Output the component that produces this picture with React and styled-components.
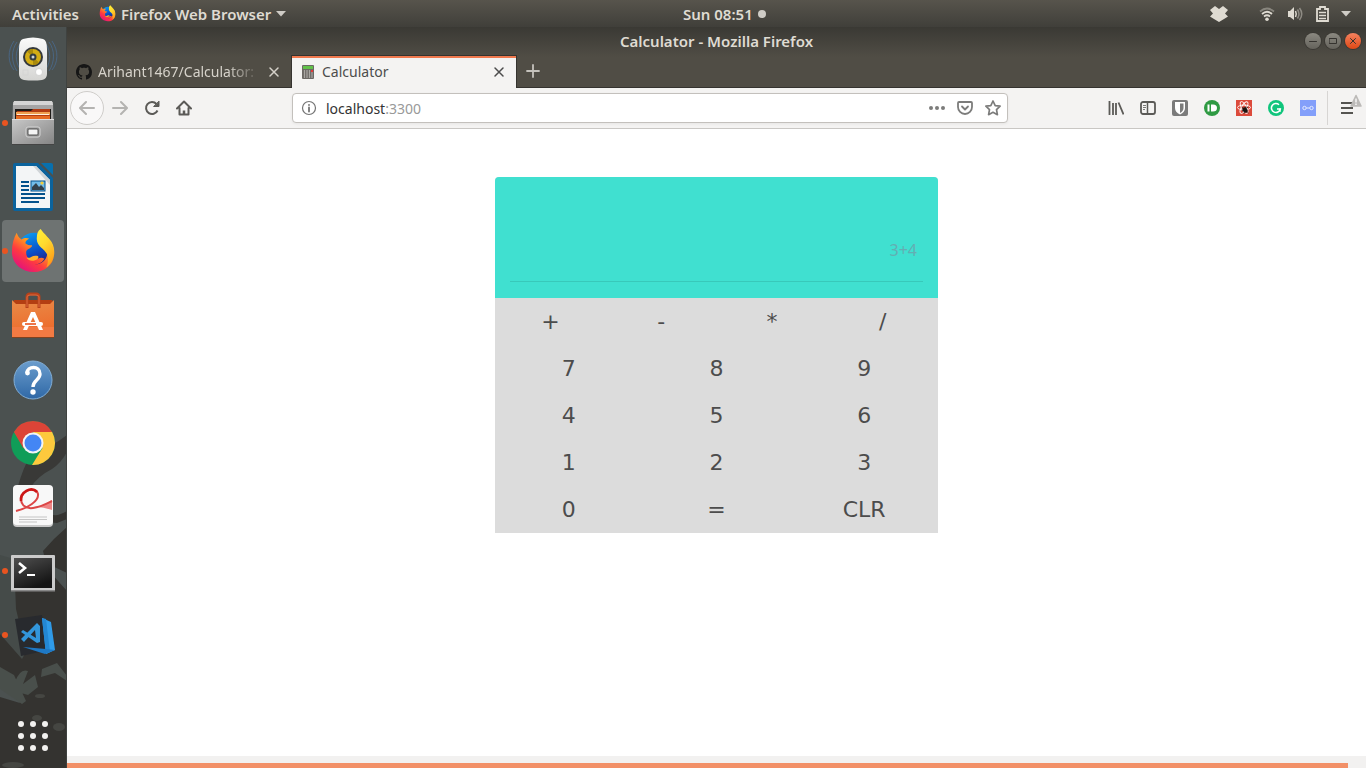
import React, { useState } from "react";
import styled, { createGlobalStyle, css } from "styled-components";

const UI_FONT = '"Noto Sans", "Open Sans", sans-serif';

const GlobalStyle = createGlobalStyle`
  *, *::before, *::after { box-sizing: border-box; }
  body { margin: 0; background: #fff; font-family: ${UI_FONT}; font-size: 14px; }
  button, input { font: inherit; color: inherit; margin: 0; padding: 0; border: 0; background: none; }
  svg { display: block; flex: none; }
`;

/* ---------- desktop frame ---------- */

const Desktop = styled.div`
  min-height: 100vh;
  display: flex;
  flex-direction: column;
`;

const TopBar = styled.header`
  height: 27px;
  display: grid;
  grid-template-columns: 1fr 1fr;
  background: linear-gradient(#57544c, #403f3a);
  color: #dfdbd2;
  font-size: 15px;
  font-weight: 600;
`;

const TopGroup = styled.div`
  display: flex;
  align-items: center;
  padding-left: ${(p) => p.$inset || 0}px;
  gap: ${(p) => p.$gap || 0}px;
  margin-left: ${(p) => (p.$end ? "auto" : "0")};
  padding-right: ${(p) => (p.$end ? 15 : 0)}px;
`;

const TopRight = styled.div`
  display: flex;
`;

const TopButton = styled.button`
  display: flex;
  align-items: center;
  gap: 5px;
  line-height: 20px;
  white-space: nowrap;
`;

const ClockDot = styled.span`
  width: 8px;
  height: 8px;
  border-radius: 50%;
  background: #cfccc6;
`;

const Workspace = styled.div`
  flex: 1;
  display: flex;
`;

/* ---------- dock ---------- */

const Dock = styled.nav`
  position: relative;
  width: 67px;
  flex: none;
  display: flex;
  flex-direction: column;
  background: #4b5150;
`;

const Wallpaper = styled.svg`
  position: absolute;
  inset: 0;
  width: 100%;
  height: 100%;
`;

const DockButton = styled.button`
  position: relative;
  width: 66px;
  height: 64px;
  display: flex;
  align-items: center;
  justify-content: center;
  ${(p) => p.$last && css`margin-top: auto;`}
  ${(p) =>
    p.$active &&
    css`
      &::before {
        content: "";
        position: absolute;
        inset: 1px 2px;
        border-radius: 4px;
        background: #6e7372;
      }
    `}
  ${(p) =>
    p.$running &&
    css`
      &::after {
        content: "";
        position: absolute;
        left: 2px;
        top: 29px;
        width: 6px;
        height: 6px;
        border-radius: 50%;
        background: #e95420;
      }
    `}
  svg { position: relative; }
`;

/* ---------- browser window ---------- */

const Window = styled.main`
  flex: 1;
  min-width: 0;
  display: flex;
  flex-direction: column;
  background: #fff;
`;

const WindowHead = styled.div`
  background: linear-gradient(#3a3934, #504d45 30px);
  border-bottom: 1px solid #35332f;
`;

const TitleBar = styled.div`
  height: 28px;
  display: grid;
  grid-template-columns: 1fr auto 1fr;
  align-items: center;
  padding: 0 5px;
`;

const Title = styled.h1`
  margin: 0;
  grid-column: 2;
  font-size: 15px;
  line-height: 20px;
  font-weight: 600;
  color: #dfdbd2;
`;

const WindowControls = styled.div`
  display: flex;
  justify-content: flex-end;
  gap: 4px;
`;

const WindowControl = styled.button`
  width: 16px;
  height: 16px;
  border-radius: 50%;
  display: grid;
  place-items: center;
  color: #35332f;
  background: ${(p) => (p.$close ? "linear-gradient(#f4825f, #de4815)" : "linear-gradient(#8b8981, #65635c)")};
  box-shadow: 0 0 0 1px #3b3934;
`;

const TabStrip = styled.div`
  height: 33px;
  display: flex;
  margin-bottom: -1px;
`;

const Tab = styled.div`
  position: relative;
  width: 224px;
  display: flex;
  align-items: center;
  gap: 6px;
  padding: 0 9px;
  color: ${(p) => (p.$selected ? "#4c4c4c" : "#d6d2ca")};
  ${(p) =>
    p.$selected &&
    css`
      width: 226px;
      border: 1px solid #35332f;
      border-bottom: 0;
      background: linear-gradient(#f1794e 2px, #f4f3f2 2px);
    `}
`;

const TabTitle = styled.span`
  flex: 1;
  min-width: 0;
  overflow: hidden;
  white-space: nowrap;
  line-height: 20px;
  ${(p) => p.$fade && css`mask-image: linear-gradient(90deg, #000 80%, transparent);`}
`;

const IconButton = styled.button`
  width: 32px;
  height: 32px;
  flex: none;
  display: grid;
  place-items: center;
  color: ${(p) => p.$color || "#5b5a57"};
`;

const CloseTab = styled(IconButton)`
  width: 16px;
  height: 16px;
  color: inherit;
`;

const Toolbar = styled.div`
  height: 41px;
  display: flex;
  align-items: center;
  padding: 0 3px;
  background: #f4f3f2;
  border-bottom: 1px solid #c9c7c4;
`;

const BackButton = styled(IconButton)`
  width: 34px;
  height: 34px;
  border: 1px solid #cfcdca;
  border-radius: 50%;
  background: #f9f8f8;
`;

const Spacer = styled.div`
  flex: 0 1 92px;
`;

const AddressBar = styled.div`
  flex: 1;
  min-width: 0;
  height: 30px;
  display: flex;
  align-items: center;
  padding: 0 0 0 8px;
  border: 1px solid #c3c0bc;
  border-radius: 4px;
  background: #fff;
  box-shadow: 0 1px 3px rgba(0, 0, 0, 0.06);
  color: #737373;
`;

const Url = styled.a`
  flex: 1;
  padding: 2px 0 0 9px;
  line-height: 20px;
  color: #999;
  text-decoration: none;
`;

const Host = styled.span`
  color: #333;
`;

const AddressAction = styled(IconButton)`
  width: 28px;
  height: 28px;
  color: #7c7c7b;
`;

const Divider = styled.span`
  width: 1px;
  height: 34px;
  margin: 0 3px;
  background: #d7d5d3;
`;

/* ---------- page ---------- */

const Page = styled.section`
  flex: 1;
  padding-top: 48px;
  display: flex;
  justify-content: center;
  align-items: flex-start;
`;

const Calculator = styled.form`
  width: calc((100% + 30px) / 3);
  border-radius: 4px 4px 0 0;
  overflow: hidden;
  font-family: "DejaVu Sans", sans-serif;
  background: #dcdcdc;
`;

const Display = styled.div`
  height: 121px;
  padding: 42px 15px 16px;
  background: #40e0d0;
`;

const Expression = styled.input`
  display: block;
  width: 100%;
  height: 63px;
  padding: 0 6px;
  border-bottom: 1px solid #38c9ba;
  font-family: ${UI_FONT};
  font-size: 16px;
  text-align: right;
  color: #63aeb2;
  outline: none;
`;

const KeyRow = styled.div`
  display: flex;
`;

const Key = styled.button`
  flex: 1 1 0;
  height: 47px;
  font-size: 22px;
  line-height: 33px;
  color: #4c4c4c;
`;

const ScrollTrack = styled.div`
  height: 12px;
  padding: 7px 18px 0 0;
  background: #f2f1f0;
`;

const ScrollThumb = styled.div`
  height: 5px;
  background: #f29067;
`;

/* ---------- drawings ---------- */

function FirefoxIcon({ size, id }) {
  return (
    <svg width={size} height={size} viewBox="0 0 48 48">
      <defs>
        <linearGradient id={id + "o"} x1="0.85" y1="0.1" x2="0.2" y2="0.95">
          <stop offset="0" stopColor="#ffe13a" />
          <stop offset="0.35" stopColor="#ff9a1f" />
          <stop offset="0.65" stopColor="#ff3b3f" />
          <stop offset="1" stopColor="#e2107f" />
        </linearGradient>
        <linearGradient id={id + "b"} x1="0.3" y1="0" x2="0.7" y2="1">
          <stop offset="0" stopColor="#0a9bf0" />
          <stop offset="0.6" stopColor="#0a4bc4" />
          <stop offset="1" stopColor="#2a1b78" />
        </linearGradient>
        <linearGradient id={id + "y"} x1="0" y1="0" x2="0.5" y2="1">
          <stop offset="0" stopColor="#fff13a" />
          <stop offset="0.5" stopColor="#ffd92e" />
          <stop offset="1" stopColor="#ffa31a" />
        </linearGradient>
      </defs>
      <circle cx="25" cy="22" r="17" fill={`url(#${id}b)`} />
      <path d="M7 5c1 3 2 5 5 7 3-2 5-2 8-1-2 1-4 3-4 5 2 2 4 2 7 2 0 3-4 3-6 6-1 7 4 10 9 9 4-1 6-3 10-1-3 5-8 6-12 6 9 1 15-5 15-13 0-4-2-6-4-9 5 1 8 5 8 9 1-7-2-12-5-16 6 4 9 11 8 19-1 11-10 18-21 18C12 46 2 37 2 25 2 17 4 10 7 5z" fill={`url(#${id}o)`} />
      <path d="M32 1c3 5 11 10 13 19 2 9-1 17-7 21 2-5 2-9 1-13-3-7-12-9-11-18 0-4 1-7 4-9z" fill={`url(#${id}y)`} />
      <path d="M17 31c5 1 6-3 11-2 2 0 2 2 1 3-4 3-9 3-12-1z" fill="#ffb02d" />
    </svg>
  );
}

const SpeakerIcon = () => (
  <svg width="50" height="50" viewBox="0 0 50 50">
    <defs>
      <linearGradient id="spk" x1="0" y1="0" x2="0" y2="1">
        <stop offset="0" stopColor="#fafafa" />
        <stop offset="1" stopColor="#d5d5d3" />
      </linearGradient>
    </defs>
    <g fill="none" stroke="#4a6c93" strokeWidth="1">
      <path d="M9 8C3 16 3 28 9 37M6 7C-1 17 0 29 6 36M12 10c-5 8-5 17 0 25M41 8c6 8 6 20 0 29M44 7c7 10 6 22 0 29M38 10c5 8 5 17 0 25" opacity=".75" />
    </g>
    <path d="M15 5Q25 2 35 5q4 1 4 10v25q0 5-5 6-9 1-18 0-5-1-5-6V15q0-9 4-10z" fill="url(#spk)" />
    <circle cx="25" cy="23" r="10" fill="#34383c" />
    <circle cx="25" cy="23" r="8" fill="#d2ac15" />
    <path d="M25 23 19 17.500a8 8 0 0 1 6-2.500zM25 23l6 5.500a8 8 0 0 1-6 2.500z" fill="#a98a0c" />
    <circle cx="25" cy="23" r="3.500" fill="#333b42" />
    <circle cx="25" cy="23" r="1.500" fill="#ccd4d9" />
    <circle cx="31" cy="38" r="3.500" fill="#fff" stroke="#c4c4c4" strokeWidth=".6" />
    <rect x="15" y="36" width="5" height="5" fill="none" stroke="#d2d2d2" strokeWidth=".7" />
  </svg>
);

const FilesIcon = () => (
  <svg width="44" height="46" viewBox="0 0 44 46">
    <defs>
      <linearGradient id="fil" x1="0" y1="0" x2="1" y2="1">
        <stop offset="0" stopColor="#c8c8c8" />
        <stop offset="1" stopColor="#858585" />
      </linearGradient>
    </defs>
    <path d="M2 2h40l1 38H1z" fill="#a5a5a5" />
    <path d="M3 1h38l1 4H2z" fill="#d5d5d5" />
    <rect x="4" y="9" width="36" height="12" fill="#1e1b18" />
    <path d="M5 13l1-2h14l2-2h17v12H5z" fill="#b23c13" />
    <rect x="5" y="12" width="34" height="3" fill="#f0a050" />
    <rect x="6" y="14" width="32" height="1" fill="#fff0dc" />
    <rect x="5" y="16" width="34" height="3" fill="#e66b22" />
    <path d="M1 19h42v25H1z" fill="url(#fil)" />
    <path d="M1 19h42v1H1z" fill="#dedede" />
    <rect x="15" y="27" width="14" height="10" rx="2" fill="#8d8d8d" stroke="#d5d5d5" />
    <rect x="17" y="29" width="10" height="6" rx="1" fill="#f4f4f4" stroke="#555" />
    <path d="M1 44h42v1H1z" fill="#444" />
  </svg>
);

const WriterIcon = () => (
  <svg width="40" height="48" viewBox="0 0 40 48">
    <path d="M2 0h23l15 15v31q0 2-2 2H2q-2 0-2-2V2q0-2 2-2z" fill="#0b639d" />
    <path d="M3 3h20l14 14v28H3z" fill="#f3f5f6" />
    <path d="M23 3l14 14v5L20 3z" fill="#d0d4d7" />
    <path d="M28 0h10q2 0 2 2v10z" fill="#0870ae" />
    <path d="M8 19h8M8 23h8M8 27h8M8 31h24M8 35h24M8 39h18" stroke="#04528c" strokeWidth="2" />
    <rect x="18" y="18" width="14" height="10" fill="#72bce8" stroke="#04528c" />
    <circle cx="29" cy="20" r="1.6" fill="#f6ce38" />
    <path d="M19 27v-3l4-4 3 4 2-2 3 3v2z" fill="#34414a" />
  </svg>
);

const SoftwareIcon = () => (
  <svg width="44" height="48" viewBox="0 -2 44 48">
    <defs>
      <linearGradient id="sw" x1="0" y1="0" x2="0.2" y2="1">
        <stop offset="0" stopColor="#e98b48" />
        <stop offset="1" stopColor="#ed6a2b" />
      </linearGradient>
    </defs>
    <path d="M3 7h38l2 4H1z" fill="#b33e12" />
    <path d="M1 7l4 4h34l4-4v37H1z" fill="url(#sw)" />
    <path d="M1 34h42v10H1z" fill="#f27a43" />
    <path d="M16 15V4q0-3 3-3h6q3 0 3 3v11" fill="none" stroke="#b8421a" strokeWidth="3" />
    <path d="M16 14V4q0-2 3-2h6q3 0 3 2v10" fill="none" stroke="#dd6a3f" strokeWidth="1" />
    <path d="M20 19h4l8 18h-4l-6-13-6 13h-4z" fill="#fff" />
    <path d="M13 29h17q2 0 2 2t-2 2H13q-2 0-2-2t2-2z" fill="#fff" />
    <path d="M14 31h11" stroke="#e95420" strokeWidth="1.6" />
    <path d="M1 44h42v1H1z" fill="#80411f" />
  </svg>
);

const HelpIcon = () => (
  <svg width="42" height="44" viewBox="0 -2 42 44">
    <defs>
      <linearGradient id="hlp" x1="0" y1="0" x2="0" y2="1">
        <stop offset="0" stopColor="#6b9dcd" />
        <stop offset="1" stopColor="#2f68a6" />
      </linearGradient>
    </defs>
    <circle cx="21" cy="21" r="19" fill="url(#hlp)" stroke="#82aed6" strokeWidth="1" />
    <path d="M15 14c0-7 13-8 13 1 0 6-7 6-7 13" fill="none" stroke="#fff" strokeWidth="3.4" />
    <circle cx="15.500" cy="14" r="2.400" fill="#fff" />
    <circle cx="21" cy="33" r="2.700" fill="#fff" />
  </svg>
);

const ChromeIcon = () => (
  <svg width="46" height="46" viewBox="0 0 46 46">
    <circle cx="23" cy="23" r="22" fill="#109d58" />
    <path d="M23 12h19.100A22 22 0 0 1 22 45l10.500-17z" fill="#fdc93d" />
    <path d="M3.900 12A22 22 0 0 1 42.100 12H23L13.500 28.500z" fill="#dc4437" />
    <circle cx="23" cy="23" r="10.500" fill="#f4f4f4" />
    <circle cx="23" cy="23" r="8.500" fill="#4486f4" />
  </svg>
);

const ReaderIcon = () => (
  <svg width="42" height="44" viewBox="0 1 42 44">
    <rect x="1" y="2" width="40" height="41" rx="4" fill="#c9c9c9" />
    <rect x="1" y="1" width="40" height="40" rx="4" fill="#f8f8f8" />
    <path d="M22 22.500Q33 22 40 16v10q-8-3-18-3.500z" fill="#ee8585" />
    <path d="M4 27C16 24 27 17 26 10 25 4 14 4 10 12 7 20 13 25 21 24 29 23 34 20 40 17" fill="none" stroke="#dc4646" strokeWidth="2" />
    <path d="M9 17C8 8 19 2 25 8" fill="none" stroke="#cc1717" strokeWidth="2.600" />
    <path d="M7 33h28M7 35.500h28M7 38h18" stroke="#c4c4c4" strokeWidth="1" />
  </svg>
);

const TerminalIcon = () => (
  <svg width="46" height="42" viewBox="0 -4 46 42">
    <defs>
      <linearGradient id="trm" x1="0" y1="0" x2="0.500" y2="1">
        <stop offset="0" stopColor="#4f4f4f" />
        <stop offset="1" stopColor="#151515" />
      </linearGradient>
    </defs>
    <rect x="1" y="1" width="44" height="36" rx="1" fill="#cbcbcb" />
    <path d="M1 36h44v1.500H1z" fill="#888" />
    <rect x="4" y="4" width="38" height="30" fill="url(#trm)" />
    <path d="M9 9l6 5-6 5" fill="none" stroke="#fff" strokeWidth="2.600" />
    <path d="M17 21h8" stroke="#fff" strokeWidth="2" />
  </svg>
);

const CodeIcon = () => (
  <svg width="44" height="44" viewBox="0 0 44 44">
    <path d="M4 6l27-4 7 35-28 6z" fill="#282a2e" />
    <path d="M31 5l9 4 4 28-9 4z" fill="#2f9be8" />
    <path d="M31 5l4 1 4 33-4 2z" fill="#2387d3" />
    <path d="M12 34l23 2 9 1-10 4z" fill="#1e78c4" />
    <path d="M26 10l3 3 0 16-3 1L10 19l2-2 13 8-1-8-11 12-3-3z" fill="#3296db" />
  </svg>
);

const AppsIcon = () => (
  <svg width="32" height="32" viewBox="0 0 32 32" fill="#f2f1ef">
    {[4, 16, 28].map((y) => [4, 16, 28].map((x) => <circle key={x + "-" + y} cx={x} cy={y} r="3" />))}
  </svg>
);

const CalcFavicon = () => (
  <svg width="15" height="16" viewBox="0 0 15 16">
    <rect x="1" y="1" width="12" height="14" rx="1" fill="#6c6965" />
    <rect x="2" y="2" width="10" height="3" fill="#62c24a" />
    <path d="M3.500 6v8M6 6v8M8.500 6v8M11 8v6" stroke="#a9a6a2" strokeWidth="1.200" />
    <path d="M10 6h2v2h-2z" fill="#e23838" />
  </svg>
);

const GithubIcon = () => (
  <svg width="16" height="16" viewBox="0 0 16 16" fill="#161616">
    <path d="M8 0C3.580 0 0 3.580 0 8c0 3.540 2.290 6.530 5.470 7.590.4.070.55-.170.55-.380 0-.190-.010-.820-.010-1.490-2.010.370-2.530-.490-2.690-.940-.090-.230-.480-.940-.820-1.130-.280-.150-.680-.520-.010-.530.630-.010 1.080.580 1.230.820.720 1.210 1.870.870 2.330.660.070-.520.280-.870.510-1.070-1.780-.200-3.640-.890-3.640-3.950 0-.870.310-1.590.820-2.150-.080-.200-.360-1.020.080-2.120 0 0 .670-.210 2.200.820.640-.180 1.320-.270 2-.270s1.360.090 2 .270c1.530-1.040 2.200-.820 2.200-.820.440 1.100.160 1.920.080 2.120.510.560.820 1.270.820 2.150 0 3.070-1.870 3.750-3.650 3.950.290.250.540.730.540 1.480 0 1.070-.010 1.930-.010 2.200 0 .210.150.460.550.380A8.010 8.010 0 0 0 16 8c0-4.420-3.580-8-8-8z" />
  </svg>
);

function Line({ children, size = 16, width = 2, box = 16 }) {
  return (
    <svg width={size} height={size} viewBox={`0 0 ${box} ${box}`} fill="none" stroke="currentColor" strokeWidth={width} strokeLinecap="round" strokeLinejoin="round">
      {children}
    </svg>
  );
}

const Caret = () => (
  <svg width="10" height="6" viewBox="0 0 10 6"><path d="M0 0h10L5 5.500z" fill="#cfccc6" /></svg>
);

const DropboxIcon = () => (
  <svg width="18" height="18" viewBox="0 0 18 18" fill="#dfdbd2">
    <path d="M5 1 9 4l4-3 5 4-3 3.500 3 3-4 2.500L9 17l-5-3-4-2.500 3-3L0 5z" />
  </svg>
);

const WifiIcon = () => (
  <svg width="16" height="16" viewBox="0 0 16 16" fill="none" stroke="#dfdbd2" strokeWidth="1.700">
    <path d="M1 5.500Q8-.500 15 5.500" opacity=".4" />
    <path d="M3 8q5-4.500 10 0M5 10.500q3-2.500 6 0" />
    <circle cx="8" cy="13.200" r="1.800" fill="#dfdbd2" stroke="none" />
  </svg>
);

const VolumeIcon = () => (
  <svg width="16" height="16" viewBox="0 0 16 16" fill="none" stroke="#dfdbd2" strokeWidth="1.500">
    <path d="M1 5h2l4-4v13L3 11H1z" fill="#dfdbd2" stroke="none" />
    <path d="M8.500 5q1.500 3 0 6" />
    <path d="M10.500 3.500q3 4.500 0 9M12.500 2q4.500 6 0 12" opacity=".45" />
  </svg>
);

const BatteryIcon = () => (
  <svg width="14" height="18" viewBox="0 0 14 18" fill="none" stroke="#dfdbd2">
    <path d="M2 4h3V2h5v2h3v12H2z" strokeWidth="1.800" />
    <path d="M4 7.500h7M4 10.500h7M4 13.500h7" strokeWidth="1.300" />
  </svg>
);

const LibraryIcon = () => (
  <svg width="16" height="16" viewBox="0 0 16 16" stroke="currentColor" strokeWidth="1.800" fill="none">
    <path d="M1.500 1v14M5 3v12M8 3v12M10.500 2.500l5 12" />
  </svg>
);

const SidebarIcon = () => (
  <svg width="16" height="16" viewBox="0 0 16 16" fill="none" stroke="currentColor">
    <rect x="1" y="2" width="14" height="12" rx="2" strokeWidth="1.800" />
    <path d="M7.500 2v12" strokeWidth="1.500" />
    <path d="M3 5.500h3M3 7.500h3M3 9.500h2" strokeWidth=".8" />
  </svg>
);

const ShieldIcon = () => (
  <svg width="16" height="16" viewBox="0 0 16 16">
    <rect width="16" height="16" rx="2" fill="#7b7b7b" />
    <path d="M3 2h10v6q0 4-5 6.500Q3 12 3 8z" fill="#fff" />
    <path d="M8 3.500h3.500V8q0 3-3.500 5z" fill="#7b7b7b" />
  </svg>
);

const BulletIcon = () => (
  <svg width="16" height="16" viewBox="0 0 16 16">
    <circle cx="8" cy="8" r="8" fill="#2f9a43" />
    <path d="M3.500 4.500h2v7h-2z" fill="#fff" />
    <path d="M7 4.500h2q4 0 4 3.500t-4 3.500H7z" fill="#fff" />
  </svg>
);

const ReactDevIcon = () => (
  <svg width="16" height="16" viewBox="0 0 16 16">
    <rect width="16" height="16" fill="#dc4a3b" />
    <g fill="none" stroke="#fff" strokeWidth=".9">
      <ellipse cx="8" cy="7.500" rx="6.500" ry="2.400" />
      <ellipse cx="8" cy="7.500" rx="6.500" ry="2.400" transform="rotate(60 8 7.500)" />
      <ellipse cx="8" cy="7.500" rx="6.500" ry="2.400" transform="rotate(120 8 7.500)" />
    </g>
    <ellipse cx="9" cy="10" rx="2.200" ry="3" fill="#1d1412" transform="rotate(-40 9 10)" />
    <path d="M5.500 7l7 6M6 11l6-4M8 13.500l2-7" stroke="#1d1412" strokeWidth=".8" />
  </svg>
);

const GrammarIcon = () => (
  <svg width="16" height="16" viewBox="0 0 16 16">
    <circle cx="8" cy="8" r="8" fill="#10c57c" />
    <path d="M11 4.700A4.500 4.500 0 1 0 12.300 9H9" fill="none" stroke="#fff" strokeWidth="1.500" />
    <path d="M12 8.500v3.500" stroke="#fff" strokeWidth="1.300" />
  </svg>
);

const GogglesIcon = () => (
  <svg width="16" height="16" viewBox="0 0 16 16">
    <rect width="16" height="16" fill="#839ffa" />
    <g fill="none" stroke="#e5ebff" strokeWidth="1">
      <circle cx="4.500" cy="8" r="1.700" />
      <circle cx="11.500" cy="8" r="1.700" />
      <path d="M6.200 8h3.600" />
    </g>
  </svg>
);

const MenuIcon = () => (
  <svg width="30" height="28" viewBox="0 0 30 28">
    <path d="M9 9h12M9 14h12M9 19h12" stroke="#555450" strokeWidth="2" />
    <path d="M24 1.500 29 12H19z" fill="#bcbab8" stroke="#bcbab8" strokeWidth="1.500" strokeLinejoin="round" />
    <path d="M24 4.500v4M24 9.500v1.500" stroke="#fff" strokeWidth="1.300" />
  </svg>
);

const CrossIcon = () => (
  <Line size={12} box={12} width={1.5}><path d="M2 2l8 8M10 2l-8 8" /></Line>
);

function DockWallpaper() {
  return (
    <Wallpaper viewBox="0 0 67 741" preserveAspectRatio="none">
      <path d="M67 408Q52 420 32 425q-9 16-14 34l12 2q8-12 22-19 9-6 15-17z" fill="#393937" />
      <path d="M67 484q-8 5-14 4-7-7-14 0 8 8 18 8l10-4zM67 500q-13 11-24 24l3 12 21 10zM0 530q12 0 18 12l24-6 25 28v177H0V670l20 6-12-23-8-8z" fill="#343330" />
      <path d="M0 528l14 4 2 50 6 25q-4 8 5 16l-5 9L0 607z" fill="#454b49" />
      <path d="M15 655q5-14 13-11l-5 13 12-9 3 12-10 8-14-4zM42 642l15-6 10 13v5l-12-8-14 4zM0 640l14 8 12 26-4 3L0 662z" fill="#494f4b" />
      <g fill="#454642">
        <ellipse cx="40" cy="669" rx="5" ry="2" />
        <ellipse cx="37" cy="691" rx="5" ry="3" />
        <ellipse cx="59" cy="700" rx="6" ry="4" />
        <ellipse cx="13" cy="738" rx="11" ry="3" />
      </g>
      <path d="M66 0h1v741h-1z" fill="#3f4240" />
    </Wallpaper>
  );
}

/* ---------- data ---------- */

const DOCK_APPS = [
  { name: "Sound", icon: <SpeakerIcon /> },
  { name: "Files", icon: <FilesIcon />, running: true },
  { name: "Writer", icon: <WriterIcon /> },
  { name: "Firefox", icon: <FirefoxIcon size={46} id="dock" />, running: true, active: true },
  { name: "Software", icon: <SoftwareIcon /> },
  { name: "Help", icon: <HelpIcon /> },
  { name: "Chrome", icon: <ChromeIcon /> },
  { name: "Reader", icon: <ReaderIcon /> },
  { name: "Terminal", icon: <TerminalIcon />, running: true },
  { name: "Code", icon: <CodeIcon />, running: true },
];

const TOOLS = [
  ["Library", LibraryIcon],
  ["Sidebar", SidebarIcon],
  ["Passwords", ShieldIcon],
  ["Push", BulletIcon],
  ["React tools", ReactDevIcon],
  ["Grammar", GrammarIcon],
  ["Reader view", GogglesIcon],
];

const KEY_ROWS = [
  ["+", "-", "*", "/"],
  ["7", "8", "9"],
  ["4", "5", "6"],
  ["1", "2", "3"],
  ["0", "=", "CLR"],
];

function compute(expression) {
  const parts = expression.match(/\d+(?:\.\d+)?|[-+*/]/g) || [];
  const values = [];
  let op = "+";
  parts.forEach((part) => {
    if (/^[-+*/]$/.test(part)) {
      op = part;
      return;
    }
    const n = Number(part);
    if (op === "+") values.push(n);
    if (op === "-") values.push(-n);
    if (op === "*") values.push((values.pop() || 0) * n);
    if (op === "/") values.push((values.pop() || 0) / n);
  });
  return String(values.reduce((a, b) => a + b, 0));
}

export default function App() {
  const [expression, setExpression] = useState("3+4");

  const press = (key) => {
    if (key === "CLR") setExpression("");
    else if (key === "=") setExpression(compute(expression));
    else setExpression(expression + key);
  };

  return (
    <Desktop>
      <GlobalStyle />
      <TopBar>
        <TopGroup $inset={12} $gap={20}>
          <TopButton>Activities</TopButton>
          <TopButton>
            <FirefoxIcon size={17} id="top" />
            Firefox Web Browser
            <Caret />
          </TopButton>
        </TopGroup>
        <TopRight>
          <TopButton>
            Sun 08:51
            <ClockDot />
          </TopButton>
          <TopGroup $end $gap={12}>
            <DropboxIcon />
            <TopGroup $inset={19} $gap={12}>
              <WifiIcon />
              <VolumeIcon />
              <BatteryIcon />
              <Caret />
            </TopGroup>
          </TopGroup>
        </TopRight>
      </TopBar>

      <Workspace>
        <Dock>
          <DockWallpaper />
          {DOCK_APPS.map((app) => (
            <DockButton key={app.name} aria-label={app.name} $running={app.running} $active={app.active}>
              {app.icon}
            </DockButton>
          ))}
          <DockButton aria-label="Show applications" $last>
            <AppsIcon />
          </DockButton>
        </Dock>

        <Window>
          <WindowHead>
            <TitleBar>
              <Title>Calculator - Mozilla Firefox</Title>
              <WindowControls>
                <WindowControl aria-label="Minimize"><Line size={8} box={8} width={1}><path d="M0.500 4.500h7" /></Line></WindowControl>
                <WindowControl aria-label="Maximize"><Line size={8} box={8} width={1}><path d="M0.500 1.500h7v5h-7z" /></Line></WindowControl>
                <WindowControl aria-label="Close" $close><Line size={8} box={8} width={1}><path d="M1.500 1.500l5 5M6.500 1.500l-5 5" /></Line></WindowControl>
              </WindowControls>
            </TitleBar>
            <TabStrip>
              <Tab>
                <GithubIcon />
                <TabTitle $fade>Arihant1467/Calculator:</TabTitle>
                <CloseTab aria-label="Close tab"><CrossIcon /></CloseTab>
              </Tab>
              <Tab $selected>
                <CalcFavicon />
                <TabTitle>Calculator</TabTitle>
                <CloseTab aria-label="Close tab"><CrossIcon /></CloseTab>
              </Tab>
              <IconButton $color="#c5c2bc" aria-label="New tab">
                <Line width={1.8}><path d="M8 2v12M2 8h12" /></Line>
              </IconButton>
            </TabStrip>
          </WindowHead>

          <Toolbar>
            <BackButton $color="#b4b3b1" aria-label="Back">
              <Line><path d="M15 8H1.500M7 2L1 8l6 6" /></Line>
            </BackButton>
            <IconButton $color="#b4b3b1" aria-label="Forward">
              <Line><path d="M1 8h13.500M9 2l6 6-6 6" /></Line>
            </IconButton>
            <IconButton aria-label="Reload">
              <Line><path d="M13.500 10.500A6 6 0 1 1 12.500 4" strokeLinecap="butt" /><path d="M15 1.500v5h-5z" fill="currentColor" strokeWidth="1" /></Line>
            </IconButton>
            <IconButton aria-label="Home">
              <Line><path d="M1 8.500l7-7 7 7M3.500 8v6.500h9V8" /><path d="M8 14v-3.500" strokeWidth="2.500" strokeLinecap="butt" /></Line>
            </IconButton>
            <Spacer />
            <AddressBar>
              <Line width={1.2}>
                <circle cx="8" cy="8" r="6.500" />
                <path d="M8 7.500v4M8 4.800v.2" strokeWidth="1.800" />
              </Line>
              <Url href="#"><Host>localhost</Host>:3300</Url>
              <AddressAction aria-label="Page actions">
                <svg width="16" height="16" viewBox="0 0 16 16" fill="currentColor"><circle cx="2" cy="8" r="2" /><circle cx="8" cy="8" r="2" /><circle cx="14" cy="8" r="2" /></svg>
              </AddressAction>
              <AddressAction aria-label="Save to Pocket">
                <Line width={1.8}><path d="M2 2h12q1 0 1 1v4a7 7 0 0 1-14 0V3q0-1 1-1zM5 6.500l3 3 3-3" /></Line>
              </AddressAction>
              <AddressAction aria-label="Bookmark">
                <Line width={1.7}><path d="M8 1l2.200 4.600 4.900.6-3.600 3.500.9 5L8 12.300l-4.400 2.400.9-5L.9 6.200l4.900-.6z" /></Line>
              </AddressAction>
            </AddressBar>
            <Spacer />
            {TOOLS.map(([name, Icon]) => (
              <IconButton key={name} aria-label={name}><Icon /></IconButton>
            ))}
            <Divider />
            <IconButton aria-label="Menu"><MenuIcon /></IconButton>
          </Toolbar>

          <Page>
            <Calculator onSubmit={(e) => e.preventDefault()}>
              <Display>
                <Expression aria-label="Expression" value={expression} readOnly />
              </Display>
              {KEY_ROWS.map((row) => (
                <KeyRow key={row[0]}>
                  {row.map((key) => (
                    <Key key={key} type="button" onClick={() => press(key)}>{key}</Key>
                  ))}
                </KeyRow>
              ))}
            </Calculator>
          </Page>
          <ScrollTrack>
            <ScrollThumb />
          </ScrollTrack>
        </Window>
      </Workspace>
    </Desktop>
  );
}
